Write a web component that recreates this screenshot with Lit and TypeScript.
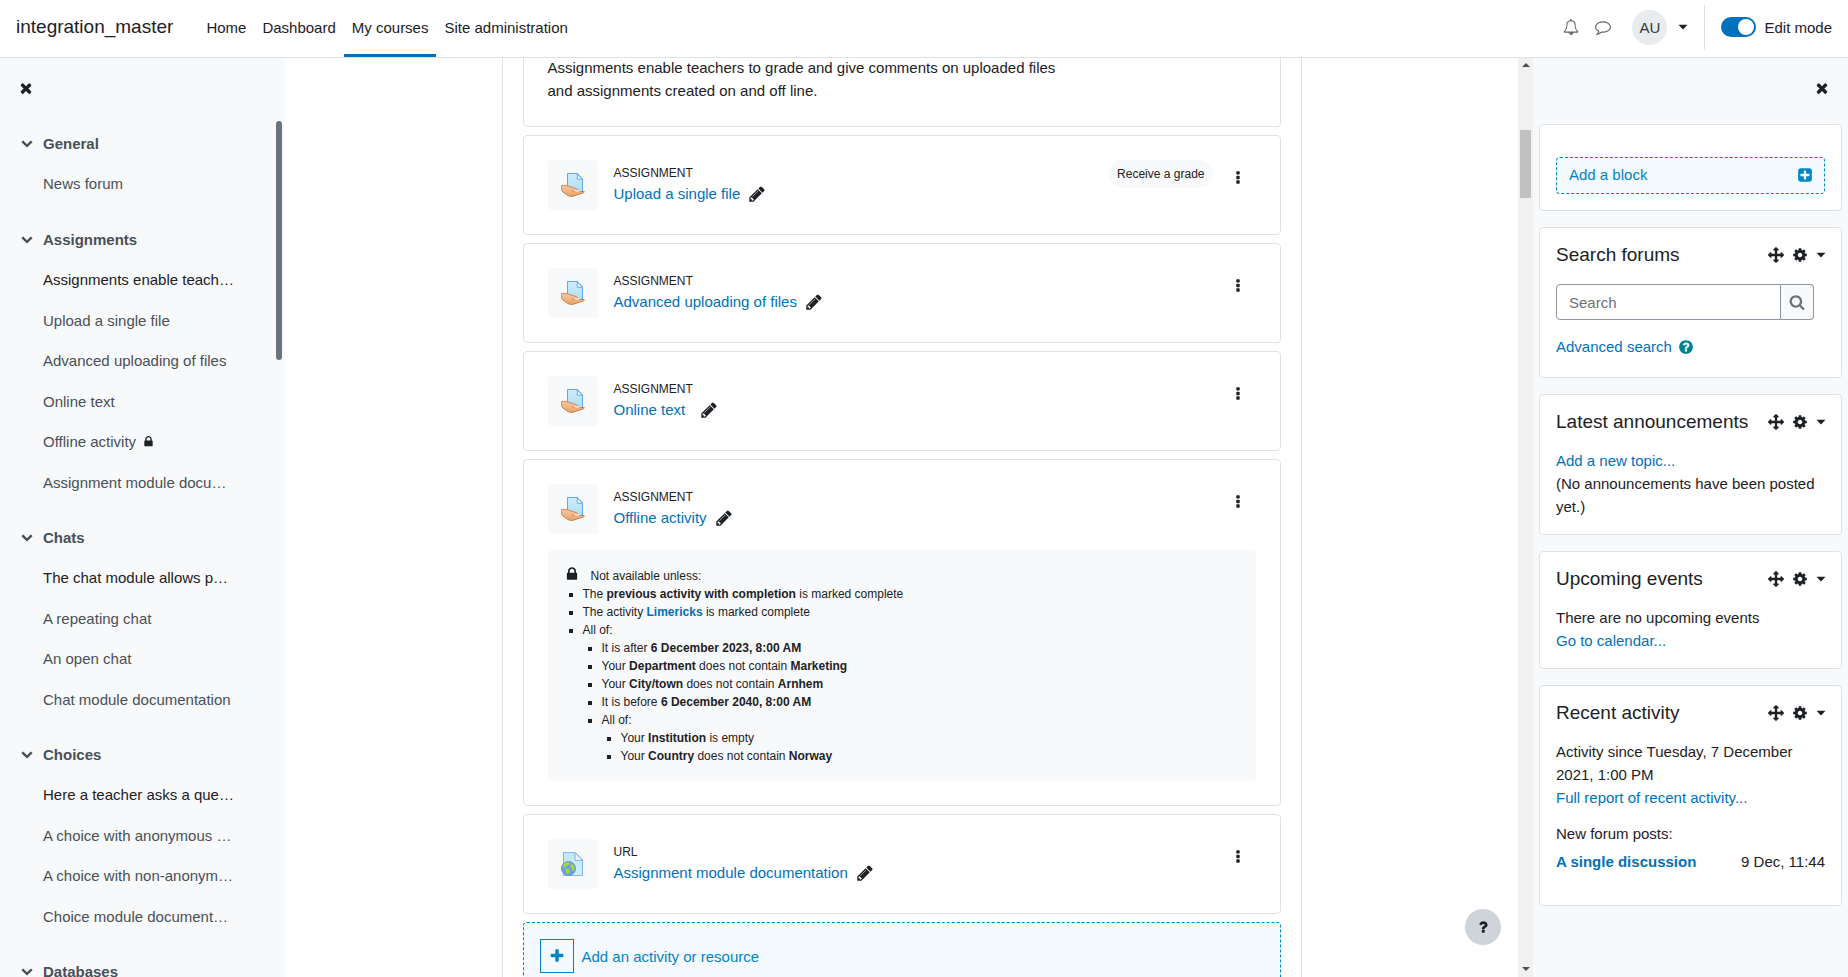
import { LitElement, html, svg, css, nothing } from "lit";
import type { TemplateResult } from "lit";
import { customElement, property } from "lit/decorators.js";
import { classMap } from "lit/directives/class-map.js";

const GLYPHS: Record<string, string> = {
  times:
    "M1490 1322q0 40-28 68l-136 136q-28 28-68 28t-68-28l-294-294-294 294q-28 28-68 28t-68-28l-136-136q-28-28-28-68t28-68l294-294-294-294q-28-28-28-68t28-68l136-136q28-28 68-28t68 28l294 294 294-294q28-28 68-28t68 28l136 136q28 28 28 68t-28 68l-294 294 294 294q28 28 28 68z",
  pencil:
    "M491 1536l91-91-235-235-91 91v107h128v128h107zm523-928q0-22-22-22-10 0-17 7l-542 542q-7 7-7 17 0 22 22 22 10 0 17-7l542-542q7-7 7-17zm-54-192l416 416-832 832h-416v-416zm683 96q0 53-37 90l-166 166-416-416 166-165q36-38 90-38 53 0 91 38l235 234q37 39 37 91z",
  lock:
    "M640 768h512v-192q0-106-75-181t-181-75-181 75-75 181v192zm832 96v576q0 40-28 68t-68 28h-960q-40 0-68-28t-28-68v-576q0-40 28-68t68-28h32v-192q0-184 132-316t316-132 316 132 132 316v192h32q40 0 68 28t28 68z",
  chevron:
    "M1683 808l-742 741q-19 19-45 19t-45-19l-742-741q-19-19-19-45.5t19-45.5l166-165q19-19 45-19t45 19l531 531 531-531q19-19 45-19t45 19l166 165q19 19 19 45.5t-19 45.5z",
  bell:
    "M912 1696q0-16-16-16-59 0-101.5-42.5t-42.5-101.5q0-16-16-16t-16 16q0 73 51.5 124.5t124.5 51.5q16 0 16-16zm-666-288h1300q-266-300-266-832 0-51-24-105t-69-103-121.5-80.5-169.5-31.5-169.5 31.5-121.5 80.5-69 103-24 105q0 532-266 832zm1482 0q0 52-38 90t-90 38h-448q0 106-75 181t-181 75-181-75-75-181h-448q-52 0-90-38t-38-90q50-42 91-88t85-119.5 74.5-158.5 50-206 19.5-260q0-152 117-282.5t307-158.5q-8-19-8-39 0-40 28-68t68-28 68 28 28 68q0 20-8 39 190 28 307 158.5t117 282.5q0 139 19.5 260t50 206 74.5 158.5 85 119.5 91 88z",
  comment:
    "M896 384q-204 0-381.5 69.5t-282 187.5-104.5 255q0 112 71.5 213.5t201.5 175.5l87 50-27 96q-24 91-70 172 152-63 275-171l43-38 57 6q69 8 130 8 204 0 381.5-69.5t282-187.5 104.5-255-104.5-255-282-187.5-381.5-69.5zm896 512q0 174-120 321.5t-326 233-450 85.5q-70 0-145-8-198 175-460 242-49 14-114 22h-5q-15 0-27-10.5t-16-27.5v-1q-3-4-.5-12t2-10 4.500-9.500l6-9 7-8.500 8-9q7-8 31-34.500t34.500-38 31-39.500 32.500-51 27-59 26-76q-157-89-247.500-220t-90.500-281q0-174 120-321.500t326-233 450-85.500 450 85.500 326 233 120 321.500z",
  arrows:
    "M1792 896q0 26-19 45l-256 256q-19 19-45 19t-45-19-19-45v-128h-384v384h128q26 0 45 19t19 45-19 45l-256 256q-19 19-45 19t-45-19l-256-256q-19-19-19-45t19-45 45-19h128v-384h-384v128q0 26-19 45t-45 19-45-19l-256-256q-19-19-19-45t19-45l256-256q19-19 45-19t45 19 19 45v128h384v-384h-128q-26 0-45-19t-19-45 19-45l256-256q19-19 45-19t45 19l256 256q19 19 19 45t-19 45-45 19h-128v384h384v-128q0-26 19-45t45-19 45 19l256 256q19 19 19 45z",
  cog:
    "M1152 896q0-106-75-181t-181-75-181 75-75 181 75 181 181 75 181-75 75-181zm512-109v222q0 12-8 23t-20 13l-185 28q-19 54-39 91 35 50 107 138 10 12 10 25t-9 23q-27 37-99 108t-94 71q-12 0-26-9l-138-108q-44 23-91 38-16 136-29 186-7 28-36 28h-222q-14 0-24.500-8.500t-11.500-21.500l-28-184q-49-16-90-37l-141 107q-10 9-25 9-14 0-25-11-126-114-165-168-7-10-7-23 0-12 8-23 15-21 51-66.500t54-70.500q-27-50-41-99l-183-27q-13-2-21-12.500t-8-23.500v-222q0-12 8-23t19-13l186-28q14-46 39-92-40-57-107-138-10-12-10-24 0-10 9-23 26-36 98.500-107.500t94.500-71.500q13 0 26 10l138 107q44-23 91-38 16-136 29-186 7-28 36-28h222q14 0 24.500 8.500t11.500 21.500l28 184q49 16 90 37l142-107q9-9 24-9 13 0 25 10 129 119 165 170 7 8 7 22 0 12-8 23-15 21-51 66.500t-54 70.500q26 50 41 98l183 28q13 2 21 12.500t8 23.500z",
  search:
    "M1216 832q0-185-131.500-316.500t-316.500-131.500-316.500 131.500-131.500 316.500 131.500 316.500 316.500 131.500 316.500-131.500 131.500-316.500zm512 832q0 52-38 90t-90 38q-54 0-90-38l-343-342q-179 124-399 124-143 0-273.500-55.500t-225-150-150-225-55.500-273.500 55.500-273.500 150-225 225-150 273.500-55.500 273.500 55.500 225 150 150 225 55.500 273.500q0 220-124 399l343 343q37 37 37 90z",
  help:
    "M1024 1376v-192q0-14-9-23t-23-9h-192q-14 0-23 9t-9 23v192q0 14 9 23t23 9h192q14 0 23-9t9-23zm256-672q0-88-55.500-163t-138.500-116-170-41q-243 0-371 213-15 24 8 42l132 100q7 6 19 6 16 0 25-12 53-68 86-92 34-24 86-24 48 0 85.500 26t37.500 59q0 38-20 61t-68 45q-63 28-115.500 86.500t-52.500 125.500v36q0 14 9 23t23 9h192q14 0 23-9t9-23q0-19 21.500-49.500t54.500-49.500q32-18 49-28.500t46-35 44.500-48 28-60.500 12.500-81zm384 192q0 209-103 385.500t-279.500 279.500-385.500 103-385.500-103-279.500-279.500-103-385.500 103-385.500 279.500-279.500 385.500-103 385.500 103 279.500 279.500 103 385.500z",
  plusSquare:
    "M1408 960v-128q0-26-19-45t-45-19h-320v-320q0-26-19-45t-45-19h-128q-26 0-45 19t-19 45v320h-320q-26 0-45 19t-19 45v128q0 26 19 45t45 19h320v320q0 26 19 45t45 19h128q26 0 45-19t19-45v-320h320q26 0 45-19t19-45zm256-544v960q0 119-84.500 203.500t-203.500 84.500h-960q-119 0-203.500-84.500t-84.500-203.500v-960q0-119 84.500-203.500t203.500-84.500h960q119 0 203.500 84.500t84.500 203.500z",
  plus:
    "M1600 736v192q0 40-28 68t-68 28h-416v416q0 40-28 68t-68 28h-192q-40 0-68-28t-28-68v-416h-416q-40 0-68-28t-28-68v-192q0-40 28-68t68-28h416v-416q0-40 28-68t68-28h192q40 0 68 28t28 68v416h416q40 0 68 28t28 68z",
  dots:
    "M1088 1248v192q0 40-28 68t-68 28h-192q-40 0-68-28t-28-68v-192q0-40 28-68t68-28h192q40 0 68 28t28 68zm0-512v192q0 40-28 68t-68 28h-192q-40 0-68-28t-28-68v-192q0-40 28-68t68-28h192q40 0 68 28t28 68zm0-512v192q0 40-28 68t-68 28h-192q-40 0-68-28t-28-68v-192q0-40 28-68t68-28h192q40 0 68 28t28 68z",
  question:
    "M1088 1256v240q0 16-12 28t-28 12h-240q-16 0-28-12t-12-28v-240q0-16 12-28t28-12h240q16 0 28 12t12 28zm316-600q0 54-15.500 101t-35 76.500-55 59.500-57.500 43.500-61 35.500q-41 23-68.500 65t-27.500 67q0 17-12 32.500t-28 15.500h-240q-15 0-25.500-18.500t-10.500-37.500v-45q0-83 65-156.500t143-108.500q59-27 84-56t25-76q0-42-46.500-74t-107.500-32q-65 0-108 29-35 25-107 115-13 16-31 16-12 0-25-8l-164-125q-13-10-15.500-25t5.500-28q160-266 464-266 80 0 161 31t146 83 106 127.500 41 158.500z",
  caret: "M392 640h1008l-504 530z",
};

const icon = (name: string, size = 16) => html`<svg
  class="icon"
  width=${size}
  height=${size}
  viewBox="0 0 1792 1792"
  aria-hidden="true"
>${svg`<path d=${GLYPHS[name]}></path>`}</svg>`;

const shared = css`
  * {
    box-sizing: border-box;
  }
  .icon {
    display: block;
    flex: none;
    fill: currentColor;
  }
  a {
    color: #0072bc;
    text-decoration: none;
  }
  button {
    font: inherit;
    color: inherit;
    background: none;
    border: 0;
    padding: 0;
    cursor: pointer;
  }
  h2,
  h3,
  p,
  ul {
    margin: 0;
    padding: 0;
  }
  ul {
    list-style: none;
  }
`;

/* ---------- top bar ---------- */

@customElement("site-header")
class SiteHeader extends LitElement {
  static styles = [
    shared,
    css`
      :host {
        display: flex;
        align-items: center;
        height: 58px;
        padding: 0 16px;
        background: #fff;
        border-bottom: 1px solid #dee2e6;
      }
      .brand {
        font-size: 19px;
        color: #1d2125;
        margin-right: 25px;
        padding-bottom: 3px;
      }
      .nav {
        display: flex;
        align-self: stretch;
        flex: 1;
      }
      .link {
        display: flex;
        align-items: center;
        padding: 0 8px;
        color: #1d2125;
        border-bottom: 3px solid transparent;
      }
      .link.active {
        border-bottom-color: #0072bc;
      }
      .tools {
        display: flex;
        align-items: center;
        align-self: stretch;
        padding-bottom: 3px;
      }
      .tool {
        padding: 8px;
        color: #5f676f;
      }
      .user {
        display: flex;
        align-items: center;
        gap: 8px;
        padding: 0 13px;
      }
      .avatar {
        display: grid;
        place-items: center;
        width: 35px;
        height: 35px;
        border-radius: 50%;
        background: #e9ecef;
        color: #343a40;
      }
      .edit {
        display: flex;
        align-items: center;
        gap: 8px;
        height: 45px;
        padding-left: 16px;
        border-left: 1px solid #dee2e6;
      }
      .switch {
        appearance: none;
        display: flex;
        align-items: center;
        justify-content: flex-end;
        width: 35px;
        height: 20px;
        margin: 0;
        padding: 2px;
        border-radius: 10px;
        background: #0072bc;
      }
      .switch::before {
        content: "";
        width: 16px;
        height: 16px;
        border-radius: 50%;
        background: #fff;
      }
    `,
  ];

  private links = ["Home", "Dashboard", "My courses", "Site administration"];

  render() {
    return html`
      <a class="brand" href="#">integration_master</a>
      <nav class="nav">
        ${this.links.map(
          (l) => html`<a href="#" class=${classMap({ link: true, active: l === "My courses" })}>${l}</a>`
        )}
      </nav>
      <div class="tools">
        <button class="tool" aria-label="Notifications">${icon("bell")}</button>
        <button class="tool" aria-label="Messages">${icon("comment")}</button>
        <button class="user" aria-label="User menu">
          <span class="avatar">AU</span>${icon("caret")}
        </button>
        <div class="edit">
          <input class="switch" type="checkbox" role="switch" id="edit" checked />
          <label for="edit">Edit mode</label>
        </div>
      </div>
    `;
  }
}

/* ---------- left drawer ---------- */

interface IndexItem {
  text: string;
  dark?: boolean;
  locked?: boolean;
}
interface IndexSection {
  title: string;
  items: IndexItem[];
}

const INDEX: IndexSection[] = [
  { title: "General", items: [{ text: "News forum" }] },
  {
    title: "Assignments",
    items: [
      { text: "Assignments enable teach…", dark: true },
      { text: "Upload a single file" },
      { text: "Advanced uploading of files" },
      { text: "Online text" },
      { text: "Offline activity", locked: true },
      { text: "Assignment module docu…" },
    ],
  },
  {
    title: "Chats",
    items: [
      { text: "The chat module allows p…", dark: true },
      { text: "A repeating chat" },
      { text: "An open chat" },
      { text: "Chat module documentation" },
    ],
  },
  {
    title: "Choices",
    items: [
      { text: "Here a teacher asks a que…", dark: true },
      { text: "A choice with anonymous …" },
      { text: "A choice with non-anonym…" },
      { text: "Choice module document…" },
    ],
  },
  { title: "Databases", items: [] },
];

@customElement("course-index")
class CourseIndex extends LitElement {
  static styles = [
    shared,
    css`
      :host {
        display: flex;
        flex-direction: column;
        width: 285px;
        flex: none;
        background: #f8f9fa;
        overflow: hidden;
      }
      .top {
        display: flex;
        align-items: center;
        flex: none;
        height: 59px;
        padding: 0 18px;
      }
      .scroller {
        display: flex;
        flex: 1;
        min-height: 0;
        padding: 4px 3px 0 21px;
      }
      .tree {
        flex: 1;
        min-width: 0;
        padding-top: 2px;
        display: flex;
        flex-direction: column;
        gap: 15px;
      }
      .head {
        display: flex;
        align-items: center;
        gap: 10px;
        height: 40px;
        font-weight: bold;
        color: #495057;
      }
      .head a,
      .item a {
        color: inherit;
      }
      .item {
        display: flex;
        align-items: center;
        gap: 6px;
        height: 40px;
        padding-left: 22px;
        color: #495057;
        white-space: nowrap;
      }
      .item:nth-child(odd) {
        height: 41px;
      }
      .item.dark,
      .item .icon {
        color: #1d2125;
      }
      .thumb {
        flex: none;
        width: 6px;
        height: 239px;
        border-radius: 3px;
        background: #6a737b;
      }
    `,
  ];

  render() {
    return html`
      <div class="top"><button aria-label="Close course index">${icon("times")}</button></div>
      <div class="scroller">
        <nav class="tree" aria-label="Course index">
          ${INDEX.map(
            (s) => html`<section>
              <div class="head">
                <button aria-label="Collapse">${icon("chevron", 12)}</button><a href="#">${s.title}</a>
              </div>
              <ul>
                ${s.items.map(
                  (i) => html`<li class=${classMap({ item: true, dark: !!i.dark })}>
                    <a href="#">${i.text}</a>${i.locked ? icon("lock", 13) : nothing}
                  </li>`
                )}
              </ul>
            </section>`
          )}
        </nav>
        <div class="thumb"></div>
      </div>
    `;
  }
}

/* ---------- activity card ---------- */

const assignPicture = html`<svg width="24" height="24" viewBox="0 0 24 24" aria-hidden="true">
  <defs>
    <linearGradient id="sheet" x1="0" y1="0" x2="0" y2="1">
      <stop offset="0" stop-color="#d0edfb" />
      <stop offset="1" stop-color="#addcf5" />
    </linearGradient>
    <linearGradient id="skin" x1="0" y1="0" x2="0" y2="1">
      <stop offset="0" stop-color="#f9cba0" />
      <stop offset="1" stop-color="#e99f68" />
    </linearGradient>
  </defs>
  <path d="M6.500 .5H16.500L21.500 6V20H6.500Z" fill="url(#sheet)" stroke="#62a8ec" />
  <path d="M16.200 .8V6.200H21.500Z" fill="#eaf7fd" stroke="#6a9fe2" stroke-width=".9" />
  <path
    d="M.6 12.500C3 12 5.500 12.600 8 13.300L14 15.200C16.500 16 17.500 17 16 17.500L11 17.600C13 18.700 16 18.800 18 18.300L23.200 18.600C23.800 19.200 22.500 19.900 20.500 20.500L14 22.700C11.500 23.700 9 23.800 7 22.600L2 19.200C.3 17.600 .4 15 .6 12.500Z"
    fill="url(#skin)"
    stroke="#bf7440"
    stroke-width=".8"
  />
  <path d="M11 17.600C14 17.200 18 17 19.500 18.200L18 18.500C15.500 19 13 18.700 11 17.600Z" fill="#fff3e6" />
</svg>`;

const urlPicture = html`<svg width="24" height="24" viewBox="0 0 24 24" aria-hidden="true">
  <defs>
    <linearGradient id="page" x1="0" y1="0" x2="0" y2="1">
      <stop offset="0" stop-color="#c2e6f8" />
      <stop offset="1" stop-color="#d3eefb" />
    </linearGradient>
  </defs>
  <path d="M2.500 .5H14L21.500 8V23.500H2.500Z" fill="url(#page)" stroke="#7fb8ec" />
  <path d="M14 .8V8.300H21.400Z" fill="#eef8fd" stroke="#74a9e6" stroke-width=".9" />
  <circle cx="7.500" cy="16.500" r="7" fill="#6ba0e4" stroke="#5c87c9" stroke-width=".8" />
  <path
    d="M2.500 12.500C4 10.500 6.500 10 8.500 10.600L8 12.500 5.500 13.800 4.800 15.500 2 15.500ZM4.300 16.500L7.500 17 8.800 19 7 22.500 5 20.500ZM10.500 11.500L13.300 14 13.500 18 11.500 19 10.800 16 9.300 14.500Z"
    fill="#a6dc2c"
  />
</svg>`;

@customElement("activity-card")
class ActivityCard extends LitElement {
  @property() kind = "Assignment";
  @property() name = "";
  @property() badge = "";

  static styles = [
    shared,
    css`
      :host {
        display: block;
        padding: 24px;
        border: 1px solid #dee2e6;
        border-radius: 4px;
        background: #fff;
      }
      .row {
        display: flex;
        align-items: flex-start;
      }
      .picture {
        display: grid;
        place-items: center;
        width: 50px;
        height: 50px;
        border-radius: 4px;
        background: #f8f9fa;
        margin-right: 16px;
      }
      .text {
        flex: 1;
        padding-top: 5px;
      }
      .kind {
        font-size: 12px;
        line-height: 17px;
        text-transform: uppercase;
      }
      .title {
        display: flex;
        align-items: center;
        gap: 8px;
        line-height: 23px;
      }
      .name {
        min-width: 78px;
      }
      .badge {
        padding: 5px 8px;
        border-radius: 14px;
        background: #f8f9fa;
        font-size: 12px;
        line-height: 18px;
      }
      .menu {
        padding: 10px 10px 10px 17px;
      }
    `,
  ];

  render() {
    return html`
      <div class="row">
        <div class="picture">${this.kind === "URL" ? urlPicture : assignPicture}</div>
        <div class="text">
          <div class="kind">${this.kind}</div>
          <div class="title">
            <a class="name" href="#">${this.name}</a>
            <button aria-label="Edit title">${icon("pencil", 18)}</button>
          </div>
        </div>
        ${this.badge ? html`<div class="badge">${this.badge}</div>` : nothing}
        <button class="menu" aria-label="Actions">${icon("dots")}</button>
      </div>
      <slot></slot>
    `;
  }
}

@customElement("availability-info")
class AvailabilityInfo extends LitElement {
  static styles = [
    shared,
    css`
      :host {
        display: block;
        margin-top: 16px;
        padding: 16px;
        border-radius: 4px;
        background: #f8f9fa;
        font-size: 12px;
        line-height: 18px;
      }
      .lead {
        display: flex;
        align-items: flex-start;
        gap: 11px;
      }
      .lead span {
        padding-top: 1px;
      }
      ul {
        list-style: square;
        padding-left: 19px;
      }
    `,
  ];

  render() {
    return html`
      <div class="lead">${icon("lock")}<span>Not available unless:</span></div>
      <ul>
        <li>The <b>previous activity with completion</b> is marked complete</li>
        <li>The activity <a href="#"><b>Limericks</b></a> is marked complete</li>
        <li>
          All of:
          <ul>
            <li>It is after <b>6 December 2023, 8:00 AM</b></li>
            <li>Your <b>Department</b> does not contain <b>Marketing</b></li>
            <li>Your <b>City/town</b> does not contain <b>Arnhem</b></li>
            <li>It is before <b>6 December 2040, 8:00 AM</b></li>
            <li>
              All of:
              <ul>
                <li>Your <b>Institution</b> is empty</li>
                <li>Your <b>Country</b> does not contain <b>Norway</b></li>
              </ul>
            </li>
          </ul>
        </li>
      </ul>
    `;
  }
}

/* ---------- right drawer ---------- */

@customElement("side-block")
class SideBlock extends LitElement {
  @property() heading = "";

  static styles = [
    shared,
    css`
      :host {
        display: block;
        padding: 16px;
        border: 1px solid #dee2e6;
        border-radius: 4px;
        background: #fff;
      }
      .bar {
        display: flex;
        align-items: center;
        gap: 8px;
        height: 21px;
        margin-bottom: 17px;
      }
      h2 {
        flex: 1;
        font-size: 19px;
        font-weight: normal;
        line-height: 21px;
        white-space: nowrap;
      }
      .config {
        display: flex;
        align-items: center;
        gap: 5px;
        margin-right: -4px;
      }
    `,
  ];

  render(): TemplateResult {
    return html`
      ${this.heading
        ? html`<div class="bar">
            <h2>${this.heading}</h2>
            <button aria-label="Move block">${icon("arrows")}</button>
            <button class="config" aria-label="Block actions">${icon("cog")}${icon("caret")}</button>
          </div>`
        : nothing}
      <slot></slot>
    `;
  }
}

@customElement("block-drawer")
class BlockDrawer extends LitElement {
  static styles = [
    shared,
    css`
      :host {
        display: block;
        width: 315px;
        flex: none;
        background: #f8f9fa;
        overflow: hidden;
        line-height: 23px;
      }
      .top {
        display: flex;
        align-items: center;
        justify-content: flex-end;
        height: 59px;
        padding: 0 18px;
      }
      .blocks {
        display: flex;
        flex-direction: column;
        gap: 16px;
        padding: 7px 6px;
      }
      .add {
        display: flex;
        align-items: center;
        justify-content: space-between;
        height: 37px;
        margin-top: 16px;
        padding: 0 11px 2px 12px;
        border: 1px dashed #0086c8;
        border-radius: 4px;
        background: #f3f9fc;
        color: #0086c8;
      }
      .search {
        display: flex;
        padding: 2px 11px 15px 0;
      }
      .field {
        flex: 1;
        min-width: 0;
        height: 36px;
        padding: 0 12px;
        font: inherit;
        color: #1d2125;
        background: #fff;
        border: 1px solid #8f959e;
        border-radius: 4px 0 0 4px;
      }
      .field::placeholder {
        color: #6a737b;
      }
      .go {
        display: grid;
        place-items: center;
        width: 33px;
        height: 36px;
        border: 1px solid #8f959e;
        border-left: 0;
        border-radius: 0 4px 4px 0;
        background: #f8f9fa;
        color: #6a737b;
      }
      .advanced {
        display: flex;
        align-items: center;
        gap: 6px;
        padding-bottom: 3px;
      }
      .advanced button {
        color: #008196;
      }
      .posts {
        padding: 13px 0 5px;
        font-weight: normal;
        font-size: 15px;
      }
      .post {
        display: flex;
        justify-content: space-between;
        padding-bottom: 16px;
      }
      .post a {
        font-weight: bold;
      }
    `,
  ];

  render() {
    return html`
      <div class="top"><button aria-label="Close block drawer">${icon("times")}</button></div>
      <div class="blocks">
        <side-block><a class="add" href="#">Add a block ${icon("plusSquare")}</a></side-block>
        <side-block heading="Search forums">
          <form class="search">
            <input class="field" type="text" placeholder="Search" aria-label="Search forums" />
            <button class="go" type="button" aria-label="Search">${icon("search")}</button>
          </form>
          <div class="advanced">
            <a href="#">Advanced search</a><button aria-label="Help with search">${icon("help")}</button>
          </div>
        </side-block>
        <side-block heading="Latest announcements">
          <div><a href="#">Add a new topic...</a></div>
          <p>(No announcements have been posted yet.)</p>
        </side-block>
        <side-block heading="Upcoming events">
          <p>There are no upcoming events</p>
          <div><a href="#">Go to calendar...</a></div>
        </side-block>
        <side-block heading="Recent activity">
          <p>Activity since Tuesday, 7 December 2021, 1:00 PM</p>
          <div><a href="#">Full report of recent activity...</a></div>
          <h3 class="posts">New forum posts:</h3>
          <div class="post"><a href="#">A single discussion</a><span>9 Dec, 11:44</span></div>
        </side-block>
      </div>
    `;
  }
}

/* ---------- page ---------- */

@customElement("app-root")
class AppRoot extends LitElement {
  static styles = [
    shared,
    css`
      :host {
        display: flex;
        flex-direction: column;
        height: 100vh;
        overflow: hidden;
        background: #fff;
        color: #1d2125;
        font-family: "Liberation Sans", Arial, sans-serif;
        font-size: 15px;
      }
      site-header {
        flex: none;
      }
      .body {
        display: flex;
        flex: 1;
        min-height: 0;
      }
      .main {
        position: relative;
        flex: 1;
        min-width: 0;
        overflow: hidden;
      }
      .course {
        display: flex;
        flex-direction: column;
        gap: 8px;
        max-width: 800px;
        margin: -27px auto 0;
        padding: 0 20px;
        border: solid #dee2e6;
        border-width: 0 1px;
      }
      .intro {
        padding: 24px;
        border: 1px solid #dee2e6;
        border-radius: 4px;
        line-height: 23px;
      }
      .intro p {
        max-width: 520px;
      }
      .add {
        display: flex;
        align-items: center;
        gap: 8px;
        padding: 16px;
        border: 1px dashed #0086c8;
        border-radius: 4px;
        background: #f3f9fc;
        color: #0086c8;
      }
      .plus {
        display: grid;
        place-items: center;
        width: 34px;
        height: 34px;
        border: 1px solid #0086c8;
      }
      .help {
        position: absolute;
        right: 17px;
        bottom: 32px;
        display: grid;
        place-items: center;
        width: 36px;
        height: 36px;
        border-radius: 50%;
        background: #ced4da;
      }
      .bar {
        display: flex;
        flex-direction: column;
        flex: none;
        width: 15px;
        padding: 5px 2px 6px;
        background: #f1f1f1;
      }
      .arrow {
        align-self: center;
        border: 4px solid transparent;
        border-top-width: 0;
        border-bottom-color: #505050;
      }
      .arrow.down {
        margin-top: auto;
        border-width: 4px 4px 0;
        border-top-color: #505050;
      }
      .thumb {
        height: 68px;
        margin-top: 63px;
        background: #c1c1c1;
      }
    `,
  ];

  render() {
    return html`
      <site-header></site-header>
      <div class="body">
        <course-index></course-index>
        <main class="main">
          <div class="course">
            <div class="intro">
              <p>
                Assignments enable teachers to grade and give comments on uploaded files and assignments
                created on and off line.
              </p>
            </div>
            <activity-card name="Upload a single file" badge="Receive a grade"></activity-card>
            <activity-card name="Advanced uploading of files"></activity-card>
            <activity-card name="Online text"></activity-card>
            <activity-card name="Offline activity"><availability-info></availability-info></activity-card>
            <activity-card kind="URL" name="Assignment module documentation"></activity-card>
            <button class="add"><span class="plus">${icon("plus")}</span>Add an activity or resource</button>
          </div>
          <button class="help" aria-label="Help">${icon("question")}</button>
        </main>
        <div class="bar" aria-hidden="true">
          <div class="arrow"></div>
          <div class="thumb"></div>
          <div class="arrow down"></div>
        </div>
        <block-drawer></block-drawer>
      </div>
    `;
  }
}
